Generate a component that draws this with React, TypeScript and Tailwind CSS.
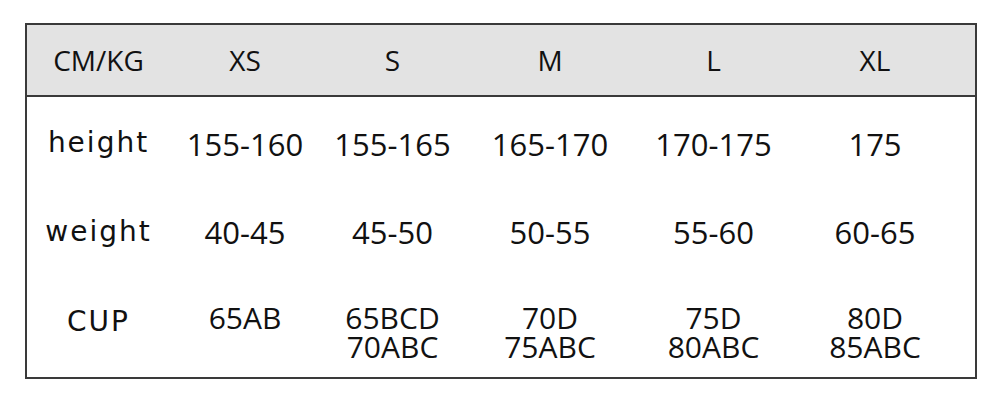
import React from 'react';

const cols = 'grid grid-cols-[143px_150px_145px_170px_157px_166px_1fr]';
const sizes = ['XS', 'S', 'M', 'L', 'XL'];

const rows: { label: string; values: string[][] }[] = [
  { label: 'height', values: [['155-160'], ['155-165'], ['165-170'], ['170-175'], ['175']] },
  { label: 'weight', values: [['40-45'], ['45-50'], ['50-55'], ['55-60'], ['60-65']] },
  {
    label: 'CUP',
    values: [['65AB'], ['65BCD', '70ABC'], ['70D', '75ABC'], ['75D', '80ABC'], ['80D', '85ABC']],
  },
];

const labelCls = "text-center font-['DejaVu_Sans',sans-serif] text-[28px] tracking-[2px]";

export default function App() {
  return (
    <div className="w-[1000px] h-[407px] bg-white overflow-hidden font-['Open_Sans',sans-serif] text-[#111]">
      <div className="ml-[25px] mt-[23px] w-[952px] border-2 border-[#3a3a3a]">
        {/* header */}
        <div className={`${cols} h-[72px] items-center bg-[#e3e3e3] border-b-2 border-[#3a3a3a] text-[28px]`}>
          <div className="text-center">CM/KG</div>
          {sizes.map(s => (
            <div key={s} className="text-center">{s}</div>
          ))}
        </div>

        {/* body */}
        <div className={`${cols} h-[93px] items-center pt-[2px] text-[31px]`}>
          <div className={`${labelCls} pb-[4px]`}>{rows[0].label}</div>
          {rows[0].values.map((v, i) => (
            <div key={i} className="text-center">{v[0]}</div>
          ))}
        </div>
        <div className={`${cols} h-[84px] items-center text-[31px]`}>
          <div className={labelCls}>{rows[1].label}</div>
          {rows[1].values.map((v, i) => (
            <div key={i} className="text-center">{v[0]}</div>
          ))}
        </div>
        <div className={`${cols} h-[103px] items-start pt-[29px] text-[30px] leading-[29px]`}>
          <div className={`${labelCls} pt-[4px]`}>{rows[2].label}</div>
          {rows[2].values.map((v, i) => (
            <div key={i} className="flex flex-col items-center">
              {v.map(line => (
                <span key={line}>{line}</span>
              ))}
            </div>
          ))}
        </div>
      </div>
    </div>
  );
}
